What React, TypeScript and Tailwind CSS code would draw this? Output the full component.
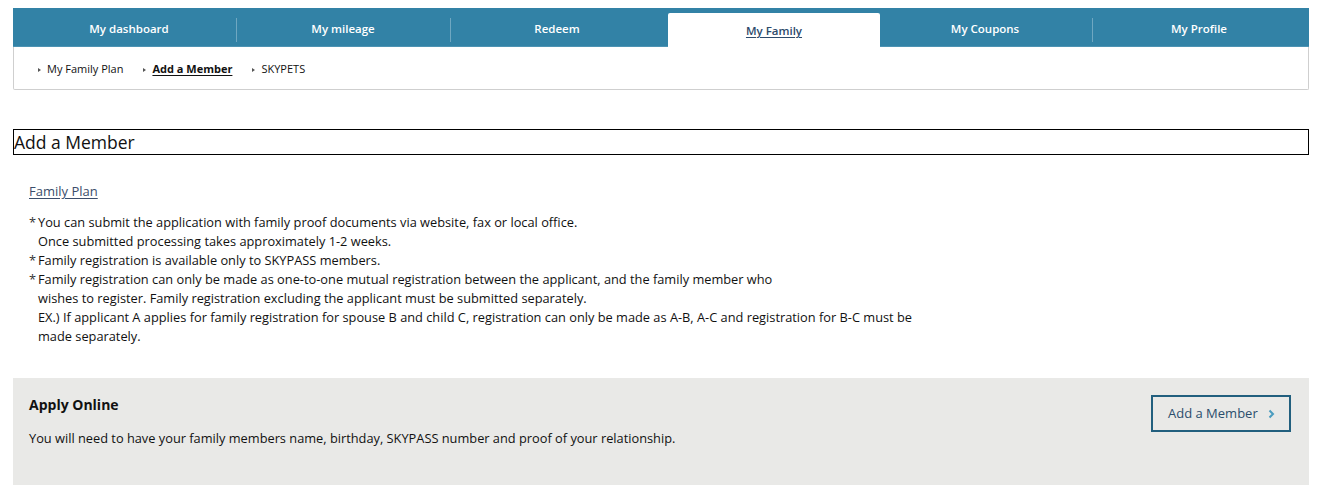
import React from 'react';

// Top level tabs
const tabs = ['My dashboard', 'My mileage', 'Redeem', 'My Family', 'My Coupons', 'My Profile'];
const activeTab = 'My Family';

const subLinks = [
  { label: 'My Family Plan', active: false },
  { label: 'Add a Member', active: true },
  { label: 'SKYPETS', active: false },
];

const Arrow = () => (
  <span className="mr-[6px] inline-block h-0 w-0 border-y-[2.5px] border-l-[3px] border-y-transparent border-l-[#555] align-middle" />
);

const App = () => {
  return (
    <div className="min-h-[495px] bg-white font-['Open_Sans',sans-serif] text-[#111]">
      <div className="w-[1322px] px-[13px] pt-[8px]">
        {/* tab bar */}
        <div className="flex h-[39px] border-b border-[#4d93b3] bg-[#3282a6] pl-[9px] pr-[3px]">
          {tabs.map((tab, i) => {
            const active = tab === activeTab;
            const prevActive = i > 0 && tabs[i - 1] === activeTab;
            return (
              <div key={tab} className="relative flex flex-1 items-end">
                {i > 0 && !active && !prevActive && (
                  <span className="absolute left-0 top-[10px] h-[24px] w-px bg-[#6fa7c1]" />
                )}
                {active ? (
                  <div className="mb-[-1px] ml-[4px] mr-[-2px] flex h-[34px] flex-1 items-center justify-center rounded-t-[2px] bg-white pt-[1px]">
                    <span className="text-[11.5px] font-semibold text-[#2d4a6b] underline underline-offset-2">{tab}</span>
                  </div>
                ) : (
                  <div className="flex h-full flex-1 items-center justify-center pt-[4px]">
                    <span className="text-[11.5px] font-semibold text-white">{tab}</span>
                  </div>
                )}
              </div>
            );
          })}
        </div>
        {/* sub navigation */}
        <div className="flex h-[43px] items-center gap-[20px] rounded-b-[2px] border border-t-0 border-[#cfcfcf] pl-[24px] pt-[3px]">
          {subLinks.map((link) => (
            <span key={link.label} className="flex items-center text-[11px]">
              <Arrow />
              <span className={link.active ? 'font-bold underline underline-offset-2' : ''}>{link.label}</span>
            </span>
          ))}
        </div>
      </div>

      <div className="mt-[39px] w-[1322px] px-[13px]">
        <h2 className="h-[26px] border border-black text-[17.5px] font-normal leading-[24px]">Add a Member</h2>

        <div className="px-[16px] pt-[23px]">
          <a href="#" className="text-[13px] text-[#3b4d6b] underline underline-offset-2">Family Plan</a>

          <ul className="mt-[11px] text-[12.8px] leading-[19px]">
            <li className="flex">
              <span className="w-[9px] shrink-0 text-[#333]">*</span>
              <span>
                You can submit the application with family proof documents via website, fax or local office.
                <br />
                Once submitted processing takes approximately 1-2 weeks.
              </span>
            </li>
            <li className="flex">
              <span className="w-[9px] shrink-0 text-[#333]">*</span>
              <span>Family registration is available only to SKYPASS members.</span>
            </li>
            <li className="flex">
              <span className="w-[9px] shrink-0 text-[#333]">*</span>
              <span>
                Family registration can only be made as one-to-one mutual registration between the applicant, and the family member who
                <br />
                wishes to register. Family registration excluding the applicant must be submitted separately.
                <br />
                EX.) If applicant A applies for family registration for spouse B and child C, registration can only be made as A-B, A-C and registration for B-C must be
                <br />
                made separately.
              </span>
            </li>
          </ul>
        </div>

        {/* apply online panel */}
        <div className="mt-[32px] flex h-[107px] w-[1296px] justify-between bg-[#e9e9e7] pl-[16px] pr-[18px]">
          <div className="pt-[16px]">
            <div className="text-[14px] font-bold">Apply Online</div>
            <p className="mt-[14px] text-[12.8px]">
              You will need to have your family members name, birthday, SKYPASS number and proof of your relationship.
            </p>
          </div>
          <div className="pt-[17px]">
            <button className="flex h-[37px] w-[140px] items-center justify-between border-2 border-[#225f7e] pl-[15px] pr-[14px] pt-[1px] text-[13px] text-[#2b4d6c]">
              Add a Member
              <svg width="7" height="10" viewBox="0 0 7 10">
                <path d="M1.5 1.5 L5 5 L1.5 8.5" fill="none" stroke="#4a9cbf" strokeWidth="2" />
              </svg>
            </button>
          </div>
        </div>
      </div>
    </div>
  );
};

export default App;
